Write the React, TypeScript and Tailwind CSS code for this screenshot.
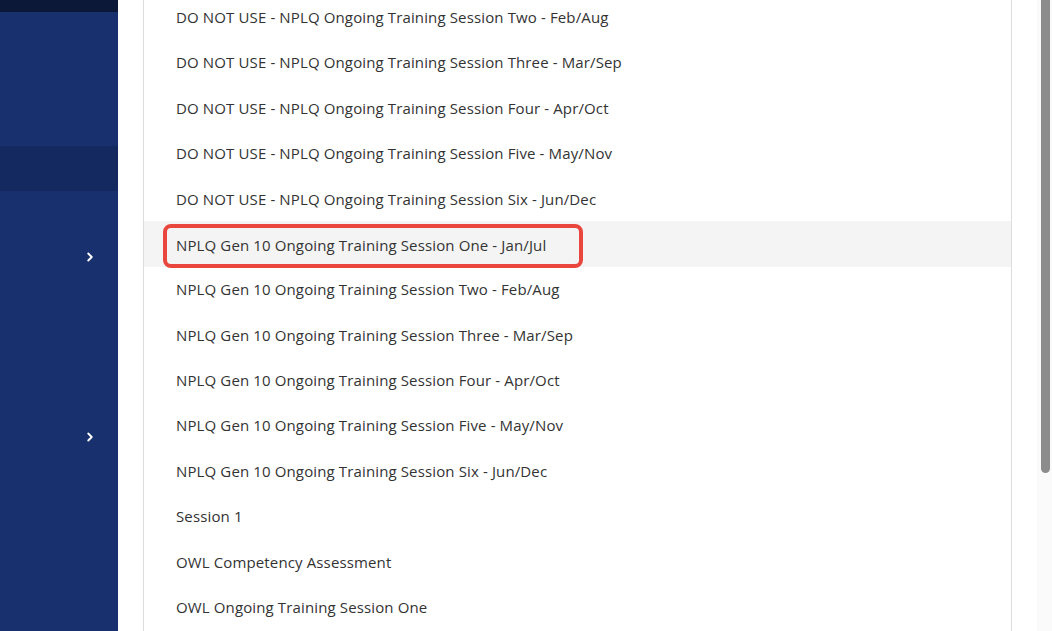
import { ChevronRight } from 'lucide-react';

const items = [
  'DO NOT USE - NPLQ Ongoing Training Session Two - Feb/Aug',
  'DO NOT USE - NPLQ Ongoing Training Session Three - Mar/Sep',
  'DO NOT USE - NPLQ Ongoing Training Session Four - Apr/Oct',
  'DO NOT USE - NPLQ Ongoing Training Session Five - May/Nov',
  'DO NOT USE - NPLQ Ongoing Training Session Six - Jun/Dec',
  'NPLQ Gen 10 Ongoing Training Session One - Jan/Jul',
  'NPLQ Gen 10 Ongoing Training Session Two - Feb/Aug',
  'NPLQ Gen 10 Ongoing Training Session Three - Mar/Sep',
  'NPLQ Gen 10 Ongoing Training Session Four - Apr/Oct',
  'NPLQ Gen 10 Ongoing Training Session Five - May/Nov',
  'NPLQ Gen 10 Ongoing Training Session Six - Jun/Dec',
  'Session 1',
  'OWL Competency Assessment',
  'OWL Ongoing Training Session One',
];

const selected = 5;

function Sidebar() {
  return (
    <aside className="flex w-[118px] shrink-0 flex-col bg-[#19306f]">
      <div className="h-[12px] bg-[#0b1838]" />
      <div className="h-[134px]" />
      <div className="h-[45px] bg-[#13295f]" />
      <div className="flex h-[132px] items-center justify-end pr-[21px]">
        <ChevronRight className="size-[14px] text-white" strokeWidth={3.2} />
      </div>
      <div className="flex h-[228px] items-center justify-end pr-[21px]">
        <ChevronRight className="size-[14px] text-white" strokeWidth={3.2} />
      </div>
    </aside>
  );
}

export default function App() {
  return (
    <div
      className="flex h-[631px] w-[1052px] overflow-hidden bg-white"
      style={{ fontFamily: '"Open Sans", "Noto Sans", sans-serif' }}
    >
      <Sidebar />
      <main className="flex flex-1 pl-[25px]">
        <div className="w-[869px] shrink-0 border-x border-[#dcdcdc]">
          <ul className="-mt-[5.5px]">
            {items.map((label, i) => (
              <li
                key={label}
                className={`flex h-[45.4px] items-center pl-[32px] text-[15px] tracking-[0.13px] text-[#333] ${i === selected ? 'bg-[#f4f4f4]' : ''}`}
              >
                {i === selected ? (
                  <span className="-ml-[13px] mt-[3px] flex h-[44px] w-[420px] items-center rounded-[8px] border-[4px] border-[#e9473d] pl-[9px]">
                    {label}
                  </span>
                ) : (
                  label
                )}
              </li>
            ))}
          </ul>
        </div>
        <div className="w-[25px]" />
        <div className="flex w-[15px] justify-center bg-[#fafafa] pl-[1px]">
          <div className="h-[473px] w-[9px] rounded-b-[5px] bg-[#8c8c8c]" />
        </div>
      </main>
    </div>
  );
}
